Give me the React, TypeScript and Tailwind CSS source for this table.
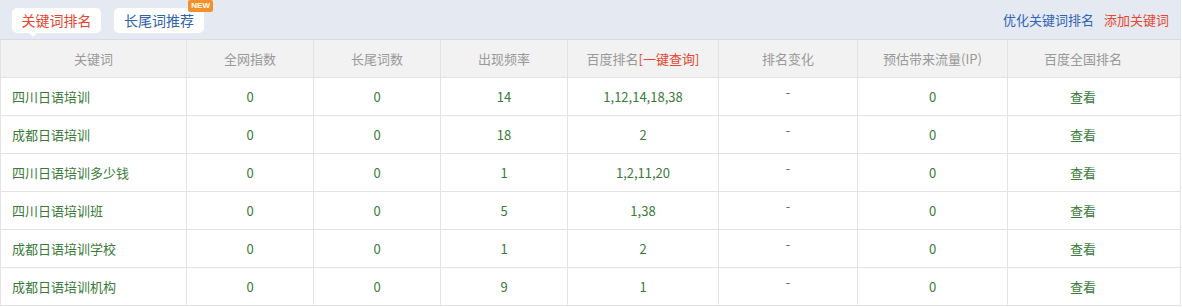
import React from "react";

const cols = "grid-cols-[186px_127px_127px_127px_151px_139px_150px_173px]";

const rows = [
  ["四川日语培训", "0", "0", "14", "1,12,14,18,38", "0"],
  ["成都日语培训", "0", "0", "18", "2", "0"],
  ["四川日语培训多少钱", "0", "0", "1", "1,2,11,20", "0"],
  ["四川日语培训班", "0", "0", "5", "1,38", "0"],
  ["成都日语培训学校", "0", "0", "1", "2", "0"],
  ["成都日语培训机构", "0", "0", "9", "1", "0"],
];

const cell = "h-[38px] border-r border-b border-[#e3e3e3] flex items-center justify-center";
const lastCell = "h-[38px] border-r border-b border-[#e3e3e3] flex items-center justify-center pr-[22px]";

export default function App() {
  return (
    <div
      className="w-[1181px] bg-white text-[13px]"
      style={{ fontFamily: '"Microsoft YaHei", "Noto Sans CJK SC", "Noto Sans", sans-serif' }}
    >
      <div className="h-[40px] bg-[#e5e9f2] border-b border-[#d6dbe4] flex items-center justify-between pl-[12px] pr-[12px]">
        <div className="flex items-center gap-[13px] pt-[1px]">
          <div className="relative h-[25px] w-[89px] bg-white rounded-[5px] flex items-center justify-center text-[14px] text-[#e4462f]">
            关键词排名
            <span className="absolute left-[16px] -bottom-[4px] w-0 h-0 border-l-[5px] border-r-[5px] border-t-[5px] border-l-transparent border-r-transparent border-t-white" />
          </div>
          <div className="relative h-[25px] w-[90px] bg-white rounded-[5px] flex items-center justify-center text-[14px] text-[#2f63a8]">
            长尾词推荐
            <span className="absolute -right-[9px] -top-[8px] h-[12px] px-[3px] bg-[#f3902a] rounded-[2px] text-white text-[8px] leading-[12px] font-bold" style={{ fontFamily: '"Liberation Sans", Arial, sans-serif' }}>
              NEW
            </span>
          </div>
        </div>
        <div className="flex items-center gap-[10px] text-[13px] pt-[1px]">
          <span className="text-[#2f63b5]">优化关键词排名</span>
          <span className="text-[#e4462f]">添加关键词</span>
        </div>
      </div>
      <div className="border-l border-[#e3e3e3]">
        <div className={`grid ${cols} bg-[#f2f2f2] text-[#999]`}>
          <div className={cell}>关键词</div>
          <div className={cell}>全网指数</div>
          <div className={cell}>长尾词数</div>
          <div className={cell}>出现频率</div>
          <div className={cell}>
            百度排名<span className="text-[#e4462f]">[一键查询]</span>
          </div>
          <div className={cell}>排名变化</div>
          <div className={cell}>预估带来流量(IP)</div>
          <div className={lastCell}>百度全国排名</div>
        </div>
        {rows.map((r, i) => (
          <div key={i} className={`grid ${cols} text-[#3a7a3a]`}>
            <div className="h-[38px] border-r border-b border-[#e3e3e3] flex items-center pl-[11px]">{r[0]}</div>
            <div className={cell}>{r[1]}</div>
            <div className={cell}>{r[2]}</div>
            <div className={cell}>{r[3]}</div>
            <div className={cell}>{r[4]}</div>
            <div className={cell}>
              <span className="text-[#666] -translate-y-[5px] inline-block">-</span>
            </div>
            <div className={cell}>{r[5]}</div>
            <div className={lastCell}>查看</div>
          </div>
        ))}
      </div>
    </div>
  );
}
